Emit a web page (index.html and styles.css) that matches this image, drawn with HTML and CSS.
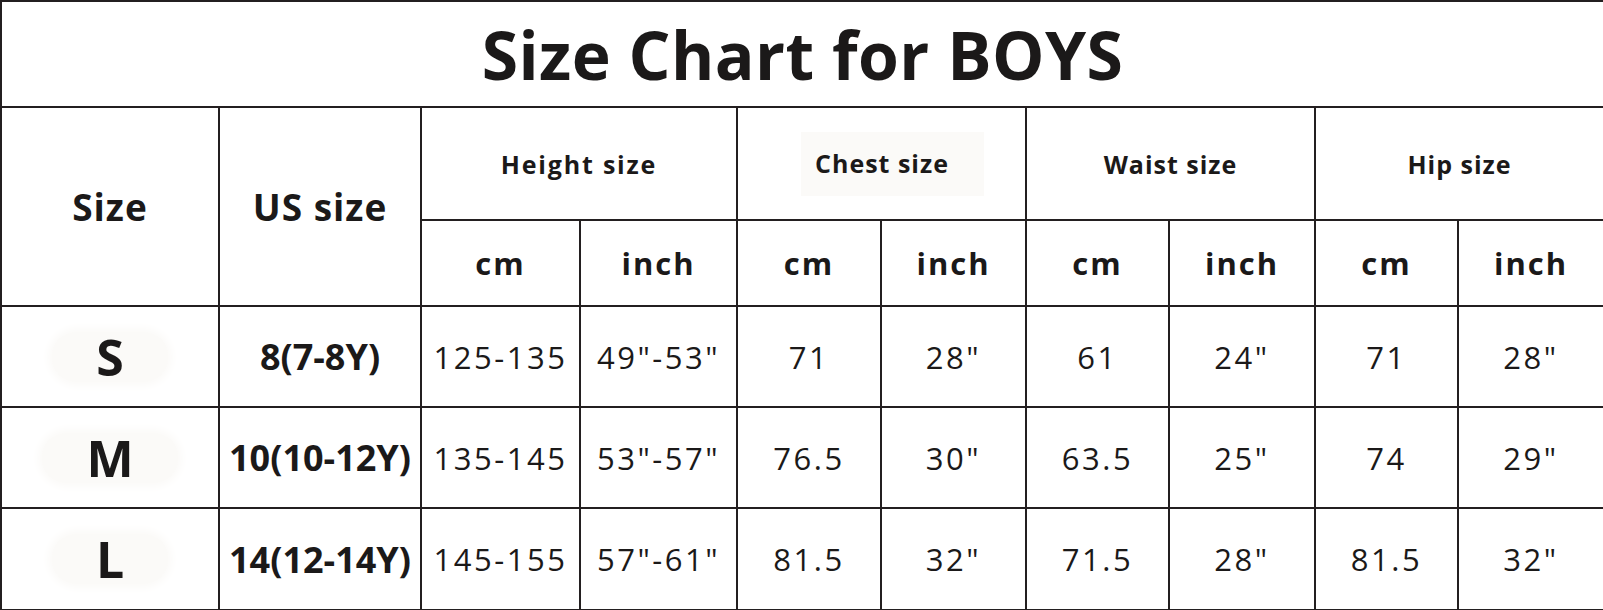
FILE: index.html
```html
<!DOCTYPE html>
<html>
<head>
<meta charset="utf-8">
<link rel="stylesheet" href="styles.css">
</head>
<body>
<table class="chart">
  <colgroup>
    <col class="c-size"><col class="c-us"><col class="c-hcm"><col class="c-hin">
    <col class="c-ccm"><col class="c-cin"><col class="c-wcm"><col class="c-win">
    <col class="c-pcm"><col class="c-pin">
  </colgroup>
  <tr class="r-title"><td colspan="10" class="title">Size Chart for BOYS</td></tr>
  <tr class="r-head1">
    <td rowspan="2" class="big-head">Size</td>
    <td rowspan="2" class="big-head">US size</td>
    <td colspan="2" class="group wide">Height size</td>
    <td colspan="2" class="group"><span class="chest">Chest size</span></td>
    <td colspan="2" class="group">Waist size</td>
    <td colspan="2" class="group">Hip size</td>
  </tr>
  <tr class="r-head2">
    <td class="unit">cm</td><td class="unit">inch</td>
    <td class="unit">cm</td><td class="unit">inch</td>
    <td class="unit">cm</td><td class="unit">inch</td>
    <td class="unit">cm</td><td class="unit">inch</td>
  </tr>
  <tr class="r-data">
    <td class="sz"><span class="blob">S</span></td><td class="us">8(7-8Y)</td>
    <td class="v">125-135</td><td class="v">49"-53"</td>
    <td class="v">71</td><td class="v">28"</td>
    <td class="v">61</td><td class="v">24"</td>
    <td class="v">71</td><td class="v">28"</td>
  </tr>
  <tr class="r-data">
    <td class="sz"><span class="blob">M</span></td><td class="us">10(10-12Y)</td>
    <td class="v">135-145</td><td class="v">53"-57"</td>
    <td class="v">76.5</td><td class="v">30"</td>
    <td class="v">63.5</td><td class="v">25"</td>
    <td class="v">74</td><td class="v">29"</td>
  </tr>
  <tr class="r-data last">
    <td class="sz"><span class="blob">L</span></td><td class="us">14(12-14Y)</td>
    <td class="v">145-155</td><td class="v">57"-61"</td>
    <td class="v">81.5</td><td class="v">32"</td>
    <td class="v">71.5</td><td class="v">28"</td>
    <td class="v">81.5</td><td class="v">32"</td>
  </tr>
</table>
</body>
</html>
```

FILE: styles.css
```css
html, body {
  margin: 0;
  padding: 0;
  background: #ffffff;
}
body {
  width: 1603px;
  height: 610px;
  overflow: hidden;
  font-family: "Open Sans", "Noto Sans", sans-serif;
  color: #1b1919;
}
.chart {
  width: 1603px;
  border-collapse: collapse;
  table-layout: fixed;
}
.chart td {
  border: 2px solid #231f20;
  padding: 0;
  text-align: center;
  vertical-align: middle;
  white-space: nowrap;
  overflow: hidden;
}
.c-size { width: 218px; }
.c-us { width: 202px; }
.c-hcm { width: 159px; }
.c-hin { width: 157px; }
.c-ccm { width: 144px; }
.c-cin { width: 145px; }
.c-wcm { width: 143px; }
.c-win { width: 146px; }
.c-pcm { width: 143px; }
.c-pin { width: 146px; }

.r-title { height: 106px; }
.r-head1 { height: 113px; }
.r-head2 { height: 86px; }
.r-data { height: 101px; }
.r-data.last { height: 102px; }

.title {
  font-weight: 700;
  font-size: 66px;
  letter-spacing: 0.4px;
  padding-bottom: 2px;
}
.big-head {
  font-weight: 700;
  font-size: 37px;
  letter-spacing: 1px;
  padding-top: 6px;
}
.group {
  font-weight: 700;
  font-size: 25px;
  letter-spacing: 1px;
  padding-bottom: 5px;
}
.group.wide {
  letter-spacing: 1.8px;
}
.chest {
  display: inline-block;
  background: #fbfaf8;
  padding: 14px 35px 16px 14px;
  margin-left: 22px;
}
.unit {
  font-weight: 700;
  font-size: 31px;
  letter-spacing: 2px;
  padding-bottom: 7px;
}
.sz {
  font-weight: 700;
  font-size: 50px;
}
.blob {
  display: inline-block;
  background: #fbfaf8;
  border-radius: 30px;
  padding: 0 44px;
  line-height: 50px;
  box-shadow: 0 0 8px 4px #fbfaf8;
}
.us {
  font-weight: 700;
  font-size: 36px;
}
.v {
  font-weight: 400;
  font-size: 31px;
  letter-spacing: 2.5px;
}
```
